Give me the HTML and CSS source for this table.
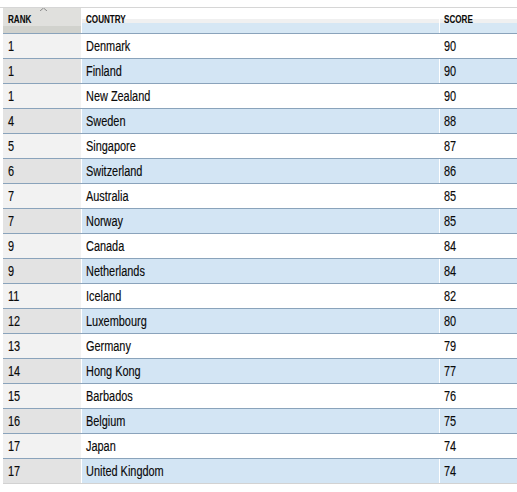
FILE: index.html
```html
<!DOCTYPE html>
<html>
<head>
<meta charset="utf-8">
<link rel="stylesheet" href="styles.css">
</head>
<body>
<div class="frame">
  <div class="table">
    <div class="row head">
      <div class="cell rank"><span class="t">RANK</span><svg class="sort" width="7" height="3" viewBox="0 0 7 3"><path d="M0 3 L3.5 0 L7 3" fill="none" stroke="#8a8a8a" stroke-width="1"/></svg></div>
      <div class="cell"><span class="t">COUNTRY</span></div>
      <div class="cell"><span class="t">SCORE</span></div>
    </div>
    <div class="row"><div class="cell rank"><span class="t">1</span></div><div class="cell"><span class="t">Denmark</span></div><div class="cell"><span class="t">90</span></div></div>
    <div class="row alt"><div class="cell rank"><span class="t">1</span></div><div class="cell"><span class="t">Finland</span></div><div class="cell"><span class="t">90</span></div></div>
    <div class="row"><div class="cell rank"><span class="t">1</span></div><div class="cell"><span class="t">New Zealand</span></div><div class="cell"><span class="t">90</span></div></div>
    <div class="row alt"><div class="cell rank"><span class="t">4</span></div><div class="cell"><span class="t">Sweden</span></div><div class="cell"><span class="t">88</span></div></div>
    <div class="row"><div class="cell rank"><span class="t">5</span></div><div class="cell"><span class="t">Singapore</span></div><div class="cell"><span class="t">87</span></div></div>
    <div class="row alt"><div class="cell rank"><span class="t">6</span></div><div class="cell"><span class="t">Switzerland</span></div><div class="cell"><span class="t">86</span></div></div>
    <div class="row"><div class="cell rank"><span class="t">7</span></div><div class="cell"><span class="t">Australia</span></div><div class="cell"><span class="t">85</span></div></div>
    <div class="row alt"><div class="cell rank"><span class="t">7</span></div><div class="cell"><span class="t">Norway</span></div><div class="cell"><span class="t">85</span></div></div>
    <div class="row"><div class="cell rank"><span class="t">9</span></div><div class="cell"><span class="t">Canada</span></div><div class="cell"><span class="t">84</span></div></div>
    <div class="row alt"><div class="cell rank"><span class="t">9</span></div><div class="cell"><span class="t">Netherlands</span></div><div class="cell"><span class="t">84</span></div></div>
    <div class="row"><div class="cell rank"><span class="t">11</span></div><div class="cell"><span class="t">Iceland</span></div><div class="cell"><span class="t">82</span></div></div>
    <div class="row alt"><div class="cell rank"><span class="t">12</span></div><div class="cell"><span class="t">Luxembourg</span></div><div class="cell"><span class="t">80</span></div></div>
    <div class="row"><div class="cell rank"><span class="t">13</span></div><div class="cell"><span class="t">Germany</span></div><div class="cell"><span class="t">79</span></div></div>
    <div class="row alt"><div class="cell rank"><span class="t">14</span></div><div class="cell"><span class="t">Hong Kong</span></div><div class="cell"><span class="t">77</span></div></div>
    <div class="row"><div class="cell rank"><span class="t">15</span></div><div class="cell"><span class="t">Barbados</span></div><div class="cell"><span class="t">76</span></div></div>
    <div class="row alt"><div class="cell rank"><span class="t">16</span></div><div class="cell"><span class="t">Belgium</span></div><div class="cell"><span class="t">75</span></div></div>
    <div class="row"><div class="cell rank"><span class="t">17</span></div><div class="cell"><span class="t">Japan</span></div><div class="cell"><span class="t">74</span></div></div>
    <div class="row alt last"><div class="cell rank"><span class="t">17</span></div><div class="cell"><span class="t">United Kingdom</span></div><div class="cell"><span class="t">74</span></div></div>
  </div>
</div>
</body>
</html>
```

FILE: styles.css
```css
html, body {
  margin: 0;
  padding: 0;
  background: #ffffff;
}

body {
  font-family: "Liberation Sans", Arial, sans-serif;
  color: #0a0a0a;
  overflow: hidden;
}

.frame {
  padding-top: 7px;
}

.table {
  border-top: 1px solid #d6d6d6;
  padding-left: 3px;
}

.row {
  display: grid;
  grid-template-columns: 78px 357px 1fr;
  column-gap: 1px;
  height: 24px;
  border-bottom: 1px solid #8aa3bb;
  background: #ffffff;
}

.cell {
  display: flex;
  align-items: center;
  padding-left: 4px;
  font-size: 14px;
  background: #ffffff;
  white-space: nowrap;
  overflow: hidden;
}

.t {
  display: inline-block;
  transform: scaleX(0.78);
  transform-origin: left center;
  -webkit-text-stroke: 0.15px #0a0a0a;
}

.cell.rank {
  padding-left: 5px;
  background: #f2f2f2;
  position: relative;
  overflow: visible;
}

.alt .cell {
  background: #d3e5f4;
}

.alt .cell.rank {
  background: #e3e3e3;
}

.last {
  border-bottom-color: #d2d2d2;
}

.head {
  height: 25px;
}

.head .cell {
  align-items: flex-start;
  padding-top: 6px;
  font-size: 10px;
  font-weight: bold;
  background: linear-gradient(#ffffff 0, #ffffff 11px, #f0f0f0 11px, #f0f0f0 15px, #d6e7f4 15px);
  box-sizing: border-box;
}

.head .t {
  transform: scaleX(0.81);
  -webkit-text-stroke: 0.1px #0a0a0a;
}

.head .cell.rank {
  background: linear-gradient(#e0e0dd 0, #e0e0dd 18px, #d1d2cd 18px);
}

.sort {
  position: absolute;
  left: 37px;
  top: 0;
}
```
